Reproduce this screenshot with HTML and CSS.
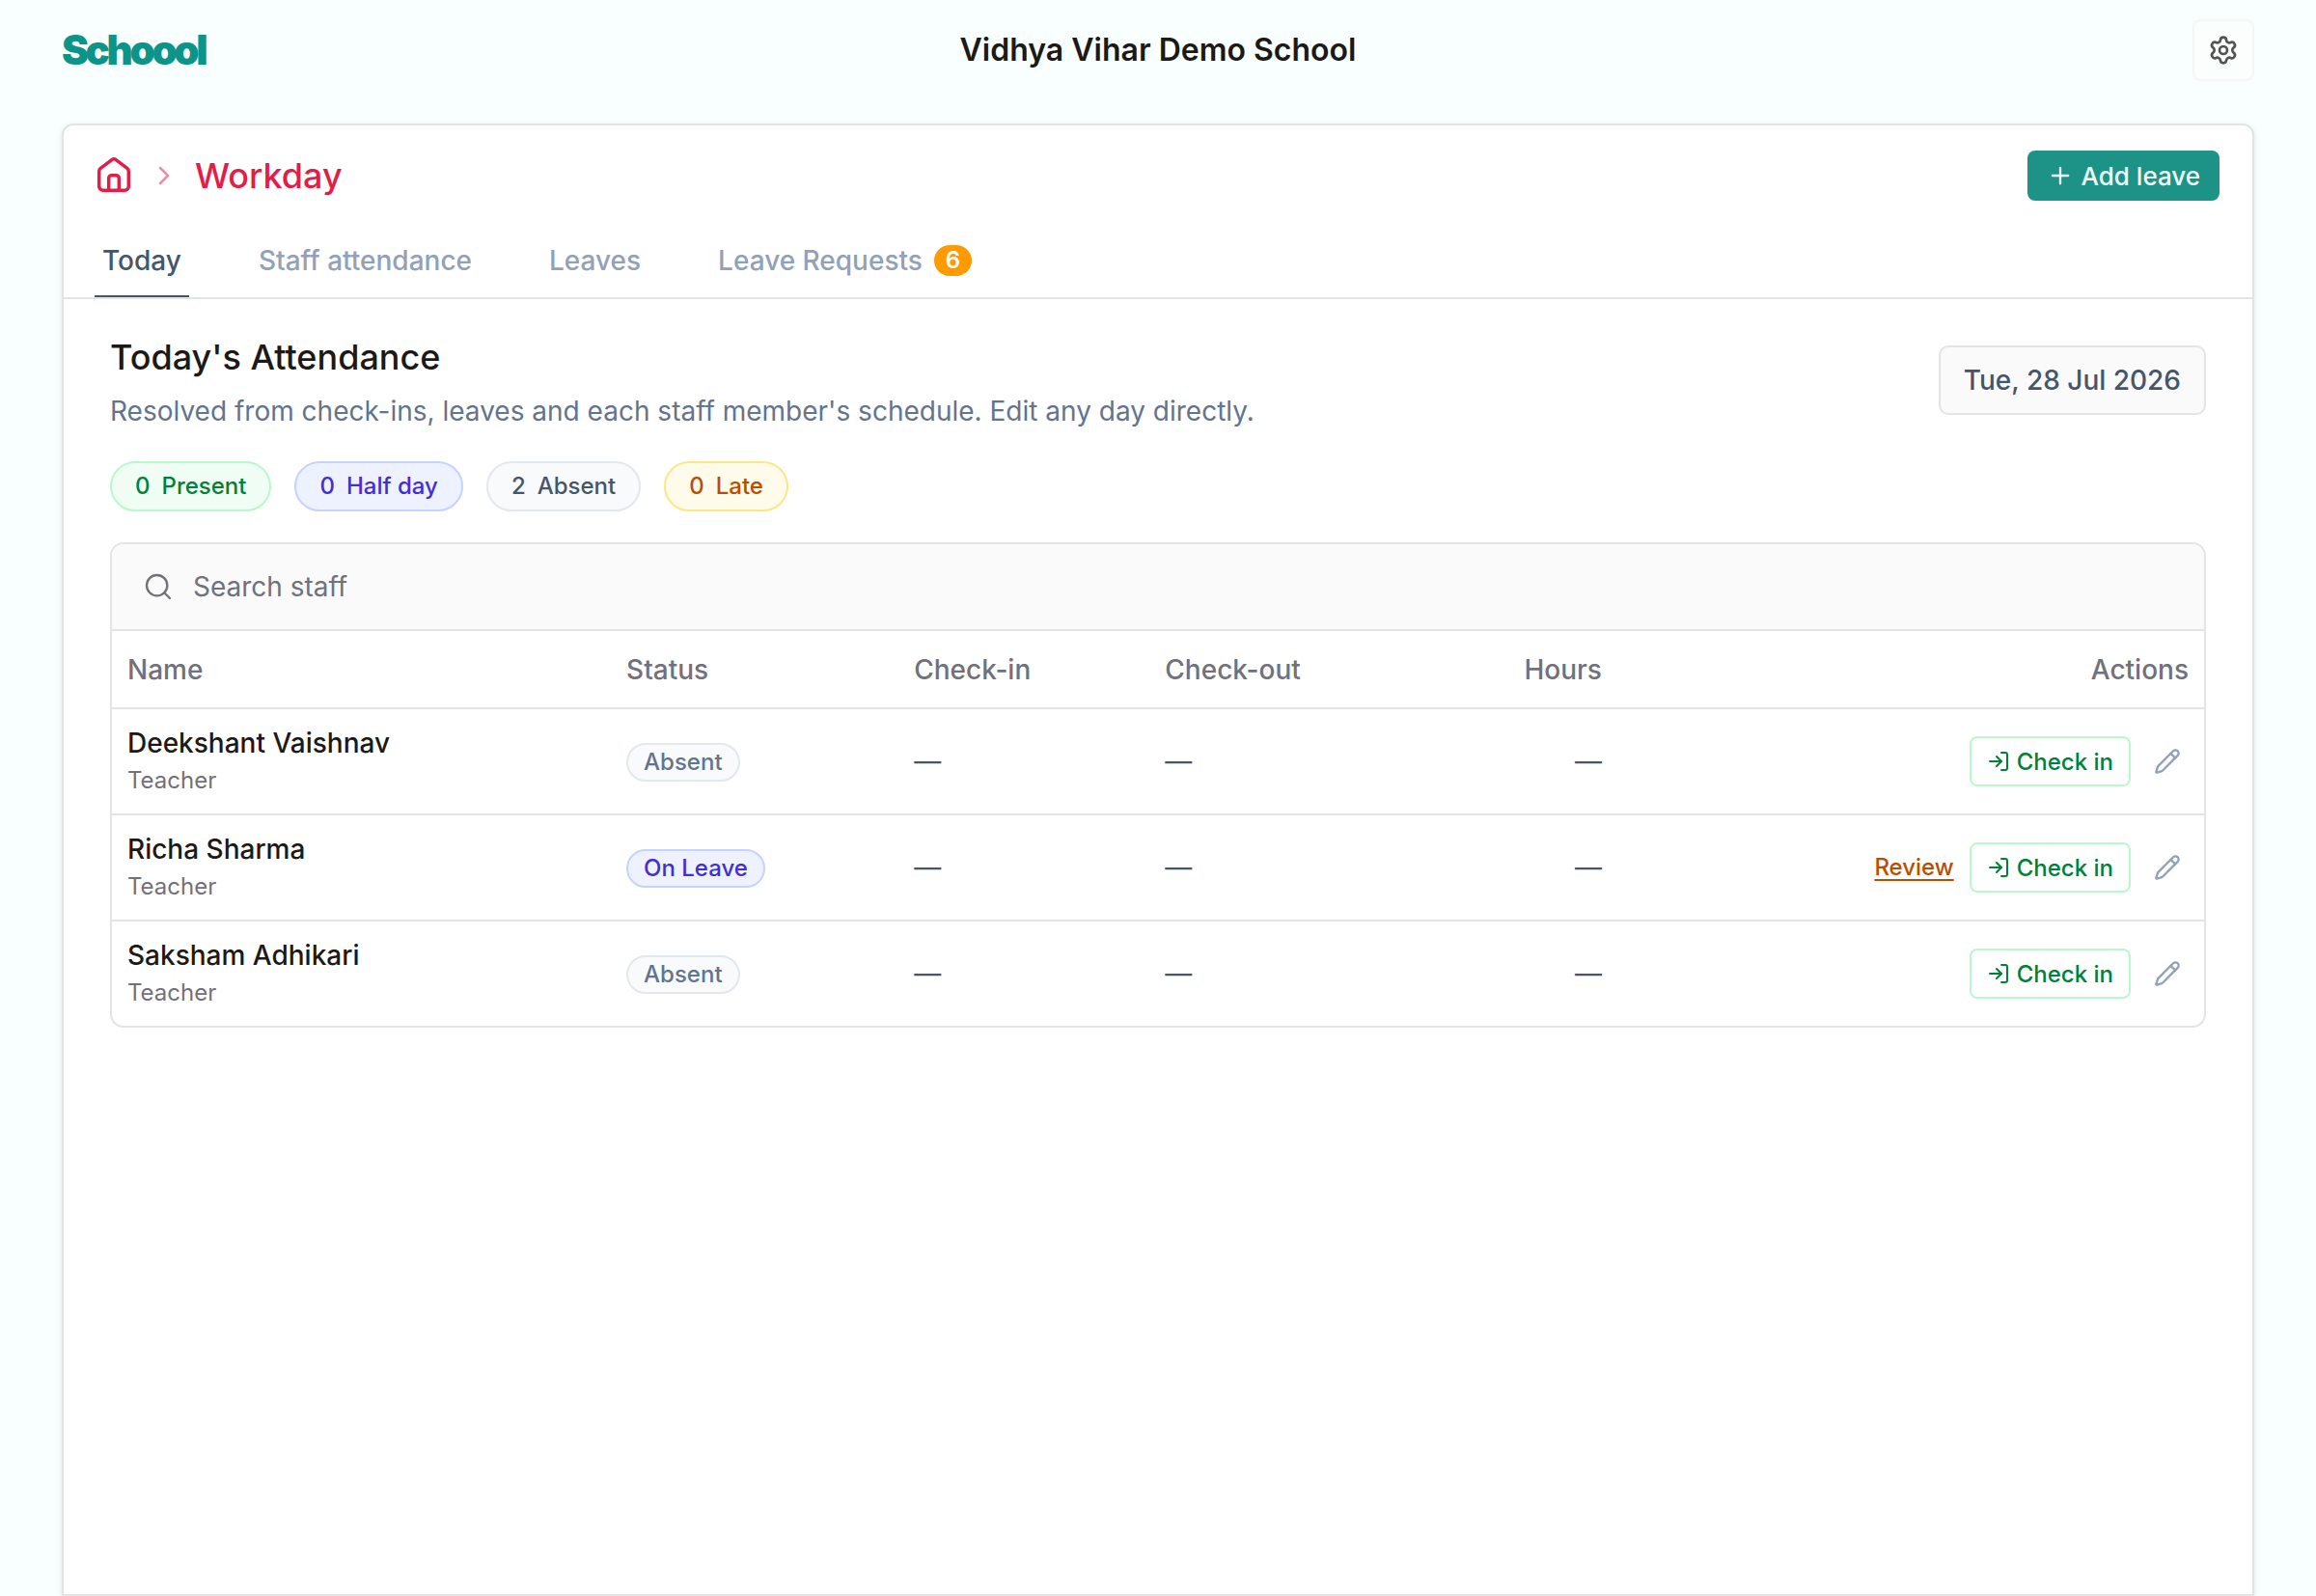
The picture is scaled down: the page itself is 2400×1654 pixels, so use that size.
FILE: index.html
```html
<!DOCTYPE html>
<html lang="en">
<head>
    <meta charset="UTF-8">
    <meta name="viewport" content="width=device-width, initial-scale=1.0">
    <title>Workday - Schoool</title>
    <link rel="stylesheet" href="styles.css">
</head>
<body>
    <!-- shared icons -->
    <svg class="sprite" aria-hidden="true">
        <symbol id="icon-login" viewBox="0 0 24 24">
            <path d="M15 3h4a2 2 0 0 1 2 2v14a2 2 0 0 1-2 2h-4"/>
            <path d="m10 17 5-5-5-5"/>
            <path d="M15 12H3"/>
        </symbol>
        <symbol id="icon-pencil" viewBox="0 0 24 24">
            <path d="M21.174 6.812a1 1 0 0 0-3.986-3.987L3.842 16.174a2 2 0 0 0-.5.83l-1.321 4.352a.5.5 0 0 0 .623.622l4.353-1.32a2 2 0 0 0 .83-.497z"/>
            <path d="m15 5 4 4"/>
        </symbol>
    </svg>

    <header class="topbar">
        <a class="logo" href="#">Schoool</a>
        <h1 class="school-name">Vidhya Vihar Demo School</h1>
        <button class="settings-btn" aria-label="Settings">
            <svg class="icon icon-md" viewBox="0 0 24 24">
                <path d="M9.671 4.136a2.34 2.34 0 0 1 4.659 0 2.34 2.34 0 0 0 3.319 1.915 2.34 2.34 0 0 1 2.33 4.033 2.34 2.34 0 0 0 0 3.831 2.34 2.34 0 0 1-2.33 4.033 2.34 2.34 0 0 0-3.319 1.915 2.34 2.34 0 0 1-4.659 0 2.34 2.34 0 0 0-3.32-1.915 2.34 2.34 0 0 1-2.33-4.033 2.34 2.34 0 0 0 0-3.831A2.34 2.34 0 0 1 6.35 6.051a2.34 2.34 0 0 0 3.319-1.915"/>
                <circle cx="12" cy="12" r="3"/>
            </svg>
        </button>
    </header>

    <main class="card">
        <div class="card-header">
            <nav class="breadcrumb" aria-label="Breadcrumb">
                <a class="home-link" href="#" aria-label="Home">
                    <svg class="icon icon-home" viewBox="0 0 40 40">
                        <path d="M4.7 15.4a4 4 0 0 1 1.5-3.1L18.2 3.4a3 3 0 0 1 3.6 0l12 8.9a4 4 0 0 1 1.5 3.1V31.3a4 4 0 0 1-4 4H8.7a4 4 0 0 1-4-4z"/>
                        <path d="M14.7 35V22.7a3 3 0 0 1 3-3h4.6a3 3 0 0 1 3 3V35"/>
                    </svg>
                </a>
                <svg class="icon icon-chevron" viewBox="0 0 24 24"><path d="m8 4 8 8-8 8"/></svg>
                <h2 class="page-name">Workday</h2>
            </nav>
            <button class="add-btn">
                <svg class="icon icon-sm" viewBox="0 0 24 24"><path d="M5 12h14M12 5v14"/></svg>
                Add leave
            </button>
        </div>

        <nav class="tabs">
            <a class="tab active" href="#">Today</a>
            <a class="tab" href="#">Staff attendance</a>
            <a class="tab" href="#">Leaves</a>
            <a class="tab" href="#">Leave Requests <span class="count">6</span></a>
        </nav>

        <section class="content">
            <div class="content-head">
                <div>
                    <h3 class="title">Today's Attendance</h3>
                    <p class="subtitle">Resolved from check-ins, leaves and each staff member's schedule. Edit any day directly.</p>
                </div>
                <button class="date-btn">Tue, 28 Jul 2026</button>
            </div>

            <div class="summary">
                <span class="pill green"><span>0</span> Present</span>
                <span class="pill indigo"><span>0</span> Half day</span>
                <span class="pill slate"><span>2</span> Absent</span>
                <span class="pill amber"><span>0</span> Late</span>
            </div>

            <div class="table-box">
                <label class="search">
                    <svg class="icon icon-md" viewBox="0 0 24 24"><circle cx="11" cy="11" r="8"/><path d="m21 21-4.3-4.3"/></svg>
                    <input type="search" placeholder="Search staff" aria-label="Search staff">
                </label>
                <table>
                    <thead>
                        <tr>
                            <th class="col-name">Name</th>
                            <th class="col-status">Status</th>
                            <th class="col-in">Check-in</th>
                            <th class="col-out">Check-out</th>
                            <th class="col-hours">Hours</th>
                            <th class="col-actions">Actions</th>
                        </tr>
                    </thead>
                    <tbody>
                        <tr>
                            <td><div class="staff-name">Deekshant Vaishnav</div><div class="staff-role">Teacher</div></td>
                            <td><span class="badge">Absent</span></td>
                            <td>—</td>
                            <td>—</td>
                            <td class="col-hours">—</td>
                            <td>
                                <div class="actions">
                                    <button class="checkin-btn"><svg class="icon icon-xs"><use href="#icon-login"/></svg>Check in</button>
                                    <button class="edit-btn" aria-label="Edit"><svg class="icon icon-sm"><use href="#icon-pencil"/></svg></button>
                                </div>
                            </td>
                        </tr>
                        <tr>
                            <td><div class="staff-name">Richa Sharma</div><div class="staff-role">Teacher</div></td>
                            <td><span class="badge on-leave">On Leave</span></td>
                            <td>—</td>
                            <td>—</td>
                            <td class="col-hours">—</td>
                            <td>
                                <div class="actions">
                                    <a class="review" href="#">Review</a>
                                    <button class="checkin-btn"><svg class="icon icon-xs"><use href="#icon-login"/></svg>Check in</button>
                                    <button class="edit-btn" aria-label="Edit"><svg class="icon icon-sm"><use href="#icon-pencil"/></svg></button>
                                </div>
                            </td>
                        </tr>
                        <tr>
                            <td><div class="staff-name">Saksham Adhikari</div><div class="staff-role">Teacher</div></td>
                            <td><span class="badge">Absent</span></td>
                            <td>—</td>
                            <td>—</td>
                            <td class="col-hours">—</td>
                            <td>
                                <div class="actions">
                                    <button class="checkin-btn"><svg class="icon icon-xs"><use href="#icon-login"/></svg>Check in</button>
                                    <button class="edit-btn" aria-label="Edit"><svg class="icon icon-sm"><use href="#icon-pencil"/></svg></button>
                                </div>
                            </td>
                        </tr>
                    </tbody>
                </table>
            </div>
        </section>
    </main>
</body>
</html>
```
FILE: styles.css
```css
* {
    box-sizing: border-box;
}

body {
    font-family: Inter, sans-serif;
    font-size: 28px;
    line-height: 40px;
    color: #1c1917;
    background-color: #f8fffe;
    margin: 0;
    padding: 0 64px;
    min-height: 100vh;
    display: flex;
    flex-direction: column;
}

h1, h2, h3, p {
    margin: 0;
}

button, input {
    font-family: inherit;
    cursor: pointer;
}

a {
    color: inherit;
    text-decoration: none;
}

.sprite {
    display: none;
}

.icon {
    fill: none;
    stroke: currentColor;
    stroke-width: 2;
    stroke-linecap: round;
    stroke-linejoin: round;
    flex-shrink: 0;
}

.icon-xs {
    width: 24px;
    height: 24px;
}

.icon-sm {
    width: 28px;
    height: 28px;
}

.icon-md {
    width: 32px;
    height: 32px;
}

/* top bar */
.topbar {
    display: grid;
    grid-template-columns: 1fr auto 1fr;
    align-items: center;
    height: 104px;
    margin-bottom: 24px;
}

.logo {
    font-size: 42px;
    font-weight: 900;
    letter-spacing: -0.08em;
    color: #0d9488;
}

.school-name {
    font-size: 32px;
    font-weight: 600;
}

.settings-btn {
    justify-self: end;
    width: 64px;
    height: 64px;
    display: flex;
    align-items: center;
    justify-content: center;
    background-color: #fafffe;
    border: 2px solid #f5f5f5;
    border-radius: 8px;
    color: #525252;
    padding: 0;
}

/* card */
.card {
    flex: 1;
    background-color: #fff;
    border: 2px solid #e4e4e4;
    border-radius: 12px 12px 0 0;
    box-shadow: 0 2px 6px rgba(0, 0, 0, 0.1);
}

.card-header {
    display: flex;
    align-items: center;
    justify-content: space-between;
    padding: 26px 34px 24px 32px;
}

.breadcrumb {
    display: flex;
    align-items: center;
    gap: 20px;
    color: #e11d48;
}

.home-link {
    display: flex;
}

.icon-home {
    width: 40px;
    height: 40px;
    stroke-width: 3.5;
}

.icon-chevron {
    width: 24px;
    height: 24px;
    stroke-width: 2.5;
    opacity: 0.5;
}

.page-name {
    font-size: 36px;
    font-weight: 500;
}

.add-btn {
    display: flex;
    align-items: center;
    gap: 8px;
    height: 52px;
    padding: 0 20px;
    background-color: #1d9388;
    border: none;
    border-radius: 8px;
    color: #f0fdfa;
    font-size: 26px;
    font-weight: 500;
}

.tabs {
    display: flex;
    gap: 64px;
    padding: 0 32px;
    border-bottom: 2px solid #e4e4e4;
    font-weight: 500;
    color: #90a1b9;
}

.tab {
    display: flex;
    align-items: center;
    gap: 12px;
    height: 76px;
    padding: 0 8px;
    border-top: 2px solid transparent;
    border-bottom: 2px solid transparent;
}

.tab.active {
    color: #45556c;
    border-bottom-color: #45556c;
}

.count {
    height: 32px;
    line-height: 32px;
    padding: 0 12px;
    border-radius: 16px;
    background-color: #ff9a00;
    color: #fff;
    font-size: 24px;
    font-weight: 600;
}

/* content */
.content {
    padding: 36px 48px;
}

.content-head {
    display: flex;
    align-items: center;
    justify-content: space-between;
    margin-bottom: 36px;
}

.title {
    font-size: 36px;
    font-weight: 500;
    line-height: 48px;
    margin-bottom: 16px;
}

.subtitle {
    color: #62748e;
    line-height: 32px;
}

.date-btn {
    height: 72px;
    padding: 0 24px;
    background-color: #fafafa;
    border: 2px solid #e4e4e4;
    border-radius: 10px;
    color: #45556c;
    font-size: 28px;
    font-weight: 500;
}

.summary {
    display: flex;
    gap: 24px;
    margin-bottom: 32px;
}

.pill {
    display: flex;
    align-items: center;
    gap: 12px;
    height: 52px;
    padding: 0 24px;
    border: 2px solid;
    border-radius: 26px;
    font-size: 24px;
    font-weight: 500;
}

.green {
    background-color: #f0fdf4;
    border-color: #b9f8cf;
    color: #008236;
}

.indigo {
    background-color: #eef2ff;
    border-color: #c6d2ff;
    color: #432dd7;
}

.slate {
    background-color: #f8fafc;
    border-color: #e2e8f0;
    color: #45556c;
}

.amber {
    background-color: #fffbeb;
    border-color: #fee685;
    color: #bb4d00;
}

.table-box {
    border: 2px solid #e4e4e4;
    border-radius: 14px;
    overflow: hidden;
}

.search {
    display: flex;
    align-items: center;
    gap: 20px;
    height: 90px;
    padding: 0 32px;
    background-color: #fafafa;
    border-bottom: 2px solid #e4e4e4;
    color: #71717b;
}

.search .icon {
    stroke-width: 1.75;
}

.search input {
    flex: 1;
    padding: 0;
    border: none;
    outline: none;
    background: none;
    color: #1c1917;
    font-size: 28px;
}

.search input::placeholder {
    color: #71717b;
}

/* staff table */
table {
    width: 100%;
    table-layout: fixed;
    border-collapse: separate;
    border-spacing: 0;
}

th {
    height: 79px;
    padding: 0 16px;
    color: #71717b;
    font-weight: 500;
    text-align: left;
}

td {
    height: 110px;
    padding: 0 16px;
    border-top: 2px solid #e4e4e4;
    color: #45556c;
}

.col-name {
    width: 23.85%;
}

.col-status {
    width: 13.75%;
}

.col-in {
    width: 12%;
}

.col-out {
    width: 12%;
}

.col-hours {
    text-align: right;
}

.col-actions {
    width: 28.05%;
    text-align: right;
}

.staff-name {
    color: #1c1917;
    font-weight: 500;
    line-height: 40px;
}

.staff-role {
    color: #71717b;
    font-size: 24px;
    line-height: 38px;
}

.badge {
    display: inline-block;
    height: 40px;
    line-height: 36px;
    padding: 0 16px;
    border: 2px solid #e2e8f0;
    border-radius: 20px;
    background-color: #f8fafc;
    color: #62748e;
    font-size: 24px;
    font-weight: 500;
    vertical-align: middle;
}

.badge.on-leave {
    background-color: #eef2ff;
    border-color: #c6d2ff;
    color: #432dd7;
}

.actions {
    display: flex;
    align-items: center;
    justify-content: flex-end;
    gap: 16px;
}

.review {
    color: #bb4d00;
    font-size: 24px;
    font-weight: 500;
    text-decoration: underline;
    text-underline-offset: 4px;
}

.checkin-btn {
    display: flex;
    align-items: center;
    gap: 7px;
    height: 52px;
    padding: 0 16px;
    background-color: #fff;
    border: 2px solid #b9f8cf;
    border-radius: 8px;
    color: #008236;
    font-size: 24px;
    font-weight: 500;
}

.edit-btn {
    display: flex;
    padding: 8px;
    background: none;
    border: none;
    color: #90a1b9;
}
```
